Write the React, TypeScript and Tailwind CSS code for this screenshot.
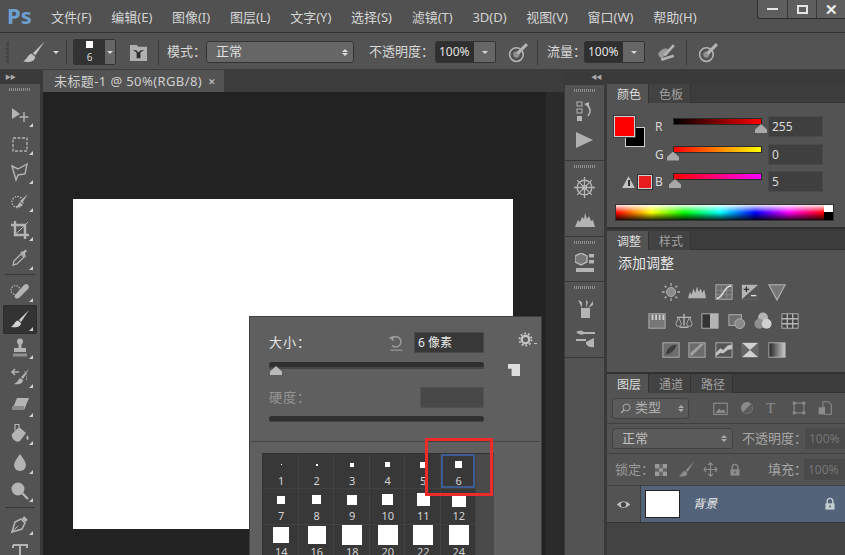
import type { ReactNode } from 'react';

// Photoshop CS6 workspace with the brush preset picker open

const ICON = '#b4b4b4';

function Svg({ size = 20, w, h, children, className }: { size?: number; w?: number; h?: number; children: ReactNode; className?: string }) {
    return (
        <svg width={w ?? size} height={h ?? size} viewBox="0 0 20 20" className={className} fill="none">
            {children}
        </svg>
    );
}

const BrushIcon = ({ size = 20, color = ICON }: { size?: number; color?: string }) => (
    <Svg size={size}>
        <path d="M19 1 L9 11 L11 13 Z" fill={color} />
        <path d="M8 11.5 C5 12 5 15 1 18 C6 19 11 18 11 14 Z" fill={color} />
    </Svg>
);

const Caret = ({ color = '#d8d8d8' }: { color?: string }) => (
    <div className="w-0 h-0 border-l-[3.5px] border-r-[3.5px] border-t-[3px] border-l-transparent border-r-transparent" style={{ borderTopColor: color }} />
);

const Grip = ({ w = 22 }: { w?: number }) => (
    <div className="h-[3px] bg-[repeating-linear-gradient(90deg,#8f8f8f_0,#8f8f8f_1px,transparent_1px,transparent_2px)]" style={{ width: w }} />
);

const Corner = () => <div className="absolute right-[4px] bottom-[3px] w-0 h-0 border-l-[4px] border-b-[4px] border-l-transparent border-b-[#d0d0d0]" />;

const SmallLock = ({ color = ICON }: { color?: string }) => (
    <Svg size={14}>
        <path d="M6 10 V6 a4 4 0 0 1 8 0 V10" stroke={color} strokeWidth="2" />
        <rect x="3.5" y="9" width="13" height="9" fill={color} />
        <rect x="9" y="12" width="2" height="3" fill="#555" />
    </Svg>
);

// toolbar drawings
const tools1: ReactNode[] = [
    <Svg key="m"><path d="M2 3 L10 9 L2 14 Z" fill={ICON} /><path d="M14 7 V17 M9.5 12 H18.5" stroke={ICON} strokeWidth="1.4" /></Svg>,
    <Svg key="r"><rect x="3" y="4" width="14" height="13" stroke={ICON} strokeWidth="1.3" strokeDasharray="3 1.5" /></Svg>,
    <Svg key="l"><path d="M2 4 L8 7 L17 2 L15 12 L8 13 L6 18 Z" stroke={ICON} strokeWidth="1.4" /></Svg>,
    <Svg key="q"><circle cx="7.5" cy="11" r="5.5" stroke={ICON} strokeWidth="1.3" strokeDasharray="1.5 1.3" /><path d="M18 3 L10 10 L12 12 Z M10 11 C8 13 8 15 5 16 C9 17 12 15 12 13Z" fill={ICON} /></Svg>,
    <Svg key="c"><path d="M5 1 V15 H19 M1 5 H15 V19" stroke={ICON} strokeWidth="2.4" /><path d="M5 15 L18 2" stroke={ICON} strokeWidth="1" /></Svg>,
    <Svg key="e"><path d="M4 13 L11 6 L14 9 L7 16 L3 17 Z" stroke={ICON} strokeWidth="1.3" /><path d="M10 4 L16 10 L15 5 L17 3 L15.5 1.5 L13 3.5Z" fill={ICON} /></Svg>,
];

const tools2: ReactNode[] = [
    <Svg key="h"><circle cx="5.5" cy="9" r="4.5" stroke={ICON} strokeWidth="1.2" strokeDasharray="1.5 1.2" /><path d="M6 13 L14 4 Q17 2 18.5 4.5 Q19.5 7 17 9 L9 17 Q6 18.5 4.5 16 Q4 14.5 6 13Z" fill={ICON} /></Svg>,
    <BrushIcon key="b" color="#d2d2d2" />,
    <Svg key="s"><circle cx="10" cy="3.5" r="3" fill={ICON} /><path d="M8.5 5 H11.5 V10 H16 V14 H4 V10 H8.5Z" fill={ICON} /><rect x="3" y="15.5" width="14" height="3" fill="#8f8f8f" /></Svg>,
    <Svg key="y"><path d="M19 2 L11 10 L13 12Z M10 11 C8 13 8 15 4 17 C8 18 13 17 13 13Z" fill={ICON} /><path d="M2 5 H9 M5 2 L2 5 L5 8" stroke={ICON} strokeWidth="1.5" /><path d="M14 4 Q18 8 16 14" stroke={ICON} strokeWidth="1" strokeDasharray="1.5 1.2" /></Svg>,
    <Svg key="z"><path d="M7 3 H19 L14 15 H2 Z" fill={ICON} /><path d="M2 11 L7 11 L14 11 L14 15 H2 Z" fill="#8a8a8a" /></Svg>,
    <Svg key="f"><path d="M2 10 L9 3 L16 9 L10 17 Q7 19 4 16 Q1 13 2 10Z" fill={ICON} /><path d="M9 3 V0.5 H5 V7" stroke={ICON} strokeWidth="1.2" /><path d="M17.5 11 Q19.5 14 18 16 Q16 16 16.5 13Z" fill={ICON} /></Svg>,
    <Svg key="d"><path d="M10 2 Q16 10 16 13 A6 6 0 0 1 4 13 Q4 10 10 2Z" fill={ICON} /></Svg>,
    <Svg key="g"><circle cx="8" cy="8" r="6.5" fill={ICON} /><path d="M12 12 L18 18" stroke={ICON} strokeWidth="2.4" /></Svg>,
];

const tools3: ReactNode[] = [
    <Svg key="p"><path d="M14 2 L18 6 L15 8 L12 5Z" fill={ICON} /><path d="M11 5 L15 9 L12 15 L2 18 L5 8 Z" stroke={ICON} strokeWidth="1.6" /><path d="M2 18 L8 12" stroke={ICON} strokeWidth="1" /></Svg>,
    <Svg key="t"><path d="M3 3 H17 V6 M3 3 V6 M10 3 V18 M7 18 H13" stroke={ICON} strokeWidth="2" /></Svg>,
];

function ToolItem({ children, active }: { children: ReactNode; active?: boolean }) {
    return (
        <div className={`relative h-[28.6px] mx-[3px] flex items-center justify-center rounded-[2px] ${active ? 'bg-[#333333] shadow-[inset_0_0_0_1px_#2c2c2c]' : ''}`}>
            {children}
            <Corner />
        </div>
    );
}

function Toolbar() {
    return (
        <div className="w-[41px] shrink-0 bg-[#535353] border-r border-[#3a3a3a]">
            <div className="h-[14px] bg-[#3a3a3a] flex items-center pl-[5px] text-[#a8a8a8] text-[6px] tracking-[-1px]">▶▶</div>
            <div className="h-[17px] flex justify-center pt-[4px]"><Grip /></div>
            {tools1.map((t, i) => <ToolItem key={i}>{t}</ToolItem>)}
            <div className="h-[4px] flex items-center px-[5px]"><div className="h-px w-full bg-[#383838]" /></div>
            {tools2.map((t, i) => <ToolItem key={i} active={i === 1}>{t}</ToolItem>)}
            <div className="h-[4px] flex items-center px-[5px]"><div className="h-px w-full bg-[#383838]" /></div>
            {tools3.map((t, i) => <ToolItem key={i}>{t}</ToolItem>)}
        </div>
    );
}

const menus = ['文件(F)', '编辑(E)', '图像(I)', '图层(L)', '文字(Y)', '选择(S)', '滤镜(T)', '3D(D)', '视图(V)', '窗口(W)', '帮助(H)'];

function MenuBar() {
    return (
        <div className="h-[33px] bg-[#515151] flex items-start border-b border-[#333333]">
            <div className="w-[51px] pl-[7px] pt-[2px] text-[#6d9fd0] text-[22px] font-bold leading-[26px]">Ps</div>
            <div className="flex gap-[19.7px] pt-[8px] text-[13px] leading-[18px] text-[#d4d4d4] whitespace-nowrap">
                {menus.map((m) => <span key={m}>{m}</span>)}
            </div>
            <div className="ml-auto flex h-[19px] rounded-bl-[3px] border-l border-b border-[#2e2e2e] bg-[#5e5e5e]">
                <div className="w-[30px] flex items-center justify-center border-r border-[#3a3a3a]"><div className="w-[11px] h-[2px] bg-[#e4e4e4]" /></div>
                <div className="w-[29px] flex items-center justify-center border-r border-[#3a3a3a]"><div className="w-[11px] h-[9px] border-2 border-[#e4e4e4]" /></div>
                <div className="w-[28px] flex items-center justify-center text-[#eeeeee] text-[15px] font-bold leading-none">✕</div>
            </div>
        </div>
    );
}

const OptSep = ({ ml }: { ml: string }) => <div className={`w-px h-[25px] bg-[#3a3a3a] ${ml}`} />;

function NumberDrop({ value }: { value: string }) {
    return (
        <div className="flex w-[61px] h-[22px] rounded-[2px] border border-[#333333] overflow-hidden">
            <div className="flex-1 bg-[#2f2f2f] text-[12px] leading-[20px] pl-[3px] text-[#e2e2e2]">{value}</div>
            <div className="w-[21px] bg-[#666666] flex items-center justify-center"><Caret /></div>
        </div>
    );
}

const AirIcon = () => (
    <Svg size={21}>
        <circle cx="8" cy="12" r="6.5" stroke={ICON} strokeWidth="1.5" />
        <circle cx="8" cy="12" r="3" fill="#8f8f8f" />
        <path d="M9 11 L18 2" stroke={ICON} strokeWidth="3" />
    </Svg>
);

function OptionsBar() {
    return (
        <div className="h-[37px] pt-[2px] bg-[#535353] flex items-center border-b border-[#3d3d3d]">
            <div className="ml-[6px] w-[3px] h-[22px] bg-[repeating-linear-gradient(0deg,#3c3c3c_0,#3c3c3c_1px,transparent_1px,transparent_2px)]" />
            <div className="ml-[13px]"><BrushIcon size={24} color="#c0c0c0" /></div>
            <div className="ml-[7px]"><Caret /></div>
            <OptSep ml="ml-[7px]" />
            <div className="ml-[6px] flex w-[43px] h-[26px] rounded-[2px] border border-[#333333] overflow-hidden">
                <div className="w-[31px] bg-[#333333] flex flex-col items-center pt-[1px]">
                    <div className="w-[7px] h-[7px] bg-white" />
                    <span className="text-[10px] leading-[14px] text-[#d8d8d8] mt-[2px]">6</span>
                </div>
                <div className="flex-1 bg-[#666666] flex items-center justify-center"><Caret /></div>
            </div>
            <div className="ml-[13px]">
                <Svg size={19}>
                    <path d="M1 2 H8 L10 4 H19 V19 H1Z" fill="#b0b0b0" />
                    <path d="M4 7 L8 10 V16 H12 V10 L16 7 L12 8 L10 10 L8 8Z" fill="#2c2c2c" />
                </Svg>
            </div>
            <OptSep ml="ml-[10px]" />
            <span className="ml-[8px] w-[39px] text-[13px] text-[#d8d8d8] whitespace-nowrap">模式：</span>
            <div className="w-[148px] h-[22px] rounded-[3px] border border-[#333333] bg-[#666666] flex items-center justify-between pl-[9px] pr-[5px] text-[13px] text-[#e0e0e0]">
                正常
                <div className="flex flex-col gap-[1px]">
                    <div className="w-0 h-0 border-l-[3px] border-r-[3px] border-b-[3px] border-l-transparent border-r-transparent border-b-[#dddddd]" />
                    <div className="w-0 h-0 border-l-[3px] border-r-[3px] border-t-[3px] border-l-transparent border-r-transparent border-t-[#dddddd]" />
                </div>
            </div>
            <span className="ml-[15px] w-[66px] text-[13px] text-[#d8d8d8] whitespace-nowrap">不透明度：</span>
            <NumberDrop value="100%" />
            <div className="ml-[12px]"><AirIcon /></div>
            <OptSep ml="ml-[8px]" />
            <span className="ml-[9px] w-[37px] text-[13px] text-[#d8d8d8] whitespace-nowrap">流量：</span>
            <NumberDrop value="100%" />
            <div className="ml-[11px]">
                <Svg size={21}>
                    <path d="M2 11 Q7 4 12 7 L6 16 Q3 15 2 11Z" fill="#9a9a9a" />
                    <path d="M8 13 L17 3 M5 17 L17 13" stroke={ICON} strokeWidth="2.5" />
                </Svg>
            </div>
            <OptSep ml="ml-[9px]" />
            <div className="ml-[11px]"><AirIcon /></div>
        </div>
    );
}

const sizes: [number, number][] = [
    [1, 1], [2, 2], [3, 4], [4, 5], [5, 6], [6, 7],
    [7, 8], [8, 9], [9, 10], [10, 11], [11, 13], [12, 14],
    [14, 16], [16, 18], [18, 20], [20, 20], [22, 20], [24, 20],
];

function BrushPopup() {
    return (
        <div className="absolute left-[249px] top-[316px] w-[293px] h-[260px] bg-[#5f5f5f] border border-[#3f3f3f] z-10">
            <div className="pl-[19px]">
                <div className="flex items-center h-[21px] mt-[15px]">
                    <span className="shrink-0 text-[13px] text-[#e6e6e6] w-[119px] tracking-[1px]">大小：</span>
                    <div className="shrink-0 w-[26px]">
                        <Svg size={16}>
                            <path d="M5 4 A6.5 6.5 0 1 1 5 13" stroke="#9a9a9a" strokeWidth="2" />
                            <path d="M1 3 L7 1 V8Z" fill="#9a9a9a" />
                            <path d="M3 19 H18" stroke="#9a9a9a" strokeWidth="1.5" />
                        </Svg>
                    </div>
                    <div className="shrink-0 w-[70px] h-[21px] bg-[#383838] border border-[#4a4a4a] text-[12px] leading-[19px] pl-[3px] text-[#e8e8e8]">6 像素</div>
                    <div className="shrink-0 ml-[34px] mb-[7px] flex items-end gap-[1px]">
                        <Svg size={15}>
                            <circle cx="10" cy="10" r="5" stroke="#c4c4c4" strokeWidth="3" />
                            <circle cx="10" cy="10" r="8" stroke="#c4c4c4" strokeWidth="2.5" strokeDasharray="2.5 2.5" />
                        </Svg>
                        <div className="w-[3px] h-px bg-[#c4c4c4] mb-[3px]" />
                    </div>
                </div>
                <div className="flex mt-[9px] h-[22px]">
                    <div className="relative w-[215px] h-[7px] rounded-[3px] bg-[#2f2f2f] shadow-[inset_0_-2px_0_#444444]">
                        <div className="absolute left-[1px] top-[4px] w-[12px] h-[9px] bg-[#b8b8b8] [clip-path:polygon(50%_0,100%_60%,100%_100%,0_100%,0_60%)]" />
                    </div>
                    <div className="ml-[24px] mt-[2px] relative w-[12px] h-[12px] bg-[#dddddd] [clip-path:polygon(0_0,100%_0,100%_100%,30%_100%,30%_40%,0_40%)]" />
                </div>
                <div className="flex items-center mt-[3px] h-[21px]">
                    <span className="text-[13px] text-[#959595] w-[151px] tracking-[1px]">硬度：</span>
                    <div className="w-[64px] h-[21px] bg-[#484848] border border-[#525252]" />
                </div>
                <div className="w-[215px] h-[6px] rounded-[3px] bg-[#2f2f2f] mt-[8px] shadow-[inset_0_-1px_0_#444444]" />
            </div>
            <div className="h-px bg-[#454545] mt-[19px] mx-[1px]" />
            <div className="ml-[12px] mt-[11px] w-[232px] bg-[#4a4a4a] border-t border-l border-[#333333] flex">
                <div className="w-[213px] grid grid-cols-6 bg-[#383838]">
                    {sizes.map(([n, s]) => (
                        <div key={n} className={`h-[35.3px] flex flex-col items-center pl-[2px] border-r border-b border-[#424242] ${n === 6 ? 'shadow-[inset_0_0_0_2px_#3f5c92]' : ''}`}>
                            <div className="h-[21px] flex items-center justify-center">
                                <div className="bg-white" style={{ width: s, height: s }} />
                            </div>
                            <span className="text-[11px] leading-[12px] text-[#d4d4d4]">{n}</span>
                        </div>
                    ))}
                </div>
            </div>
        </div>
    );
}

function Workspace() {
    return (
        <div className="flex-1 min-w-0 flex flex-col">
            <div className="h-[22px] bg-[#3c3c3c] flex">
                <div className="w-[181px] bg-[#535353] flex items-center pl-[11px] pt-[2px] text-[13px] tracking-[0.4px] text-[#cfcfcf] whitespace-nowrap">
                    未标题-1 @ 50%(RGB/8)
                    <span className="ml-[6px] text-[9px] text-[#d0d0d0]">✕</span>
                </div>
            </div>
            <div className="flex-1 flex min-h-0">
                <div className="flex-1 bg-[#222222] pl-[30px] pt-[107px]">
                    <div className="w-[440px] h-[330px] bg-white" />
                </div>
                <div className="w-[18px] bg-[#2b2b2b]" />
            </div>
        </div>
    );
}

function CollapsedGroup({ children, h }: { children: ReactNode; h: string }) {
    return (
        <div className={`${h} border-b border-[#383838] flex flex-col items-center pt-[4px]`}>
            <Grip />
            <div className="flex flex-col items-center gap-[11px] mt-[9px]">{children}</div>
        </div>
    );
}

function IconDock() {
    return (
        <div className="w-[40px] shrink-0 bg-[#535353] border-l border-[#3a3a3a]">
            <div className="h-[15px] bg-[#3a3a3a] flex items-center justify-end pr-[3px] text-[#a8a8a8] text-[6px] tracking-[-1px]">◀◀</div>
            <CollapsedGroup h="h-[76px]">
                <Svg size={20}>
                    <rect x="2" y="1" width="5" height="4" stroke={ICON} />
                    <rect x="2" y="8" width="5" height="4" stroke={ICON} />
                    <rect x="2" y="15" width="5" height="5" fill={ICON} />
                    <path d="M11 3 Q18 8 13 15" stroke={ICON} strokeWidth="1.6" />
                    <path d="M9 3 L14 1 V6Z" fill={ICON} />
                </Svg>
                <div className="w-0 h-0 border-t-[8px] border-b-[8px] border-l-[17px] border-t-transparent border-b-transparent border-l-[#b0b0b0]" />
            </CollapsedGroup>
            <CollapsedGroup h="h-[76px]">
                <Svg size={21}>
                    <circle cx="10" cy="10" r="7" stroke={ICON} strokeWidth="1.4" />
                    <circle cx="10" cy="10" r="2.5" fill={ICON} />
                    <path d="M10 0 V20 M0 10 H20 M3 3 L17 17 M17 3 L3 17" stroke={ICON} strokeWidth="1.2" />
                </Svg>
                <Svg size={20}>
                    <path d="M0 18 L3 11 L5 13 L7 8 L9 10 L10 4 L12 10 L14 7 L16 12 L18 11 L20 18Z" fill={ICON} />
                </Svg>
            </CollapsedGroup>
            <CollapsedGroup h="h-[45px]">
                <Svg size={20}>
                    <path d="M6 0 L12 3 V9 L6 12 L0 9 V3Z" stroke={ICON} strokeWidth="1.4" fill="#777777" />
                    <rect x="14" y="1" width="5" height="3.5" fill={ICON} />
                    <rect x="14" y="7" width="5" height="3.5" fill={ICON} />
                    <rect x="1" y="15" width="18" height="4" fill={ICON} />
                </Svg>
            </CollapsedGroup>
            <CollapsedGroup h="h-[76px]">
                <Svg size={20}>
                    <rect x="6" y="10" width="9" height="10" fill={ICON} />
                    <path d="M7 10 L3 2 L7 4 Z M11 10 V2 L13 4Z M13 10 L18 3 L18 7Z" fill={ICON} />
                </Svg>
                <Svg size={20}>
                    <path d="M1 3 Q6 0 9 3 H20 V5 H9 Q5 7 1 3Z M1 10 H11 V12 H1Z M11 13 L19 9 V18 Q14 19 11 15Z" fill={ICON} />
                </Svg>
            </CollapsedGroup>
        </div>
    );
}

function Tabs({ items }: { items: string[] }) {
    return (
        <div className="h-[19px] bg-[#3c3c3c] flex border-b border-[#333333]">
            {items.map((t, i) => (
                <div key={t} className={`h-[19px] pl-[10px] pr-[7px] pt-[2px] flex items-center text-[12px] border-r border-[#333333] ${i === 0 ? 'bg-[#535353] text-[#dcdcdc]' : 'bg-[#424242] text-[#a0a0a0]'}`}>
                    {t}
                </div>
            ))}
        </div>
    );
}

function ColorRow({ label, value, track, thumb, left }: { label: string; value: string; track: string; thumb: number; left?: ReactNode }) {
    return (
        <div className="flex h-[27.5px]">
            <div className="w-[40px] flex items-center justify-end pr-[3px] gap-[3px] pb-[5px]">{left}</div>
            <span className="w-[18px] text-[12px] leading-[22px] text-[#d8d8d8]">{label}</span>
            <div className="relative w-[89px] h-[7px] mt-[2px] border border-[#2a2a2a]" style={{ background: track }}>
                <div className="absolute top-[5px] w-[12px] h-[9px] bg-[#a8a8a8] [clip-path:polygon(50%_0,100%_60%,100%_100%,0_100%,0_60%)]" style={{ left: thumb }} />
            </div>
            <div className="ml-[6px] w-[55px] h-[21px] bg-[#3f3f3f] border border-[#4a4a4a] text-[12px] leading-[19px] pl-[3px] text-[#dcdcdc]">{value}</div>
        </div>
    );
}

function ColorPanel() {
    return (
        <div className="h-[145px] bg-[#535353] border-b-2 border-[#303030]">
            <Tabs items={['颜色', '色板']} />
            <div className="relative pt-[13px] pl-[8px]">
                <div className="absolute left-[18px] top-[24px] w-[20px] h-[20px] bg-black border border-[#cfcfcf]" />
                <div className="absolute left-[7px] top-[13px] w-[21px] h-[21px] bg-[#ff0000] border border-[#d0d0d0] outline outline-1 outline-[#3a3a3a]" />
                <ColorRow label="R" value="255" track="linear-gradient(90deg,#000,#ff0000)" thumb={81} />
                <ColorRow label="G" value="0" track="linear-gradient(90deg,#ff0000,#ffff00)" thumb={-7} />
                <ColorRow
                    label="B"
                    value="5"
                    track="linear-gradient(90deg,#ff0000,#ff00ff)"
                    thumb={-5}
                    left={
                        <>
                            <div className="relative w-[13px] h-[12px] bg-[#c4c4c4] [clip-path:polygon(50%_0,100%_100%,0_100%)]">
                                <div className="absolute left-[5.5px] top-[4px] w-[2px] h-[6px] bg-[#333333]" />
                            </div>
                            <div className="w-[14px] h-[14px] bg-[#e81c1c] border border-[#d0d0d0] outline outline-1 outline-[#333333]" />
                        </>
                    }
                />
                <div className="flex mt-[5px] w-[219px] h-[17px] border border-[#333333]">
                    <div className="flex-1 bg-[linear-gradient(180deg,rgba(255,255,255,0.9)_0%,rgba(255,255,255,0)_50%,rgba(0,0,0,0)_50%,rgba(0,0,0,0.85)_100%),linear-gradient(90deg,#ff0000,#ffff00_17%,#00ff00_33%,#00ffff_50%,#0000ff_67%,#ff00ff_83%,#ff0000)]" />
                    <div className="w-[9px] flex flex-col"><div className="flex-1 bg-white" /><div className="flex-1 bg-black" /></div>
                </div>
            </div>
        </div>
    );
}

const A = ({ children }: { children: ReactNode }) => <Svg size={18}>{children}</Svg>;

const adjust: ReactNode[][] = [
    [
        <A key="1"><circle cx="10" cy="10" r="5" fill="#8c8c8c" stroke={ICON} /><path d="M10 0 V3 M10 17 V20 M0 10 H3 M17 10 H20 M3 3 L5 5 M15 15 L17 17 M17 3 L15 5 M5 15 L3 17" stroke={ICON} strokeWidth="1.5" /></A>,
        <A key="2"><path d="M0 17 L2 10 L4 13 L6 6 L8 11 L10 4 L12 10 L14 6 L16 11 L18 7 L20 17Z" fill={ICON} /></A>,
        <A key="3"><rect x="1" y="2" width="18" height="16" fill="#6a6a6a" stroke={ICON} /><path d="M1 8 H19 M1 13 H19 M7 2 V18 M13 2 V18" stroke="#8c8c8c" /><path d="M2 17 C9 17 10 3 18 3" stroke="#e0e0e0" strokeWidth="1.6" /></A>,
        <A key="4"><rect x="1" y="2" width="18" height="16" fill={ICON} /><path d="M1 18 L19 2 V18Z" fill="#555555" /><path d="M3 7 H9 M6 4 V10" stroke="#333" strokeWidth="1.5" /><path d="M11 14 H17" stroke="#e0e0e0" strokeWidth="1.5" /></A>,
        <A key="5"><path d="M1 2 H19 L10 19Z" fill="#777777" stroke={ICON} strokeWidth="1.2" /></A>,
    ],
    [
        <A key="1"><rect x="1" y="2" width="18" height="16" fill="#777777" stroke={ICON} /><path d="M5 3 V9 M9 3 V9 M13 3 V9 M17 3 V9" stroke="#cccccc" strokeWidth="2" /></A>,
        <A key="2"><path d="M10 2 V15 M5 17 H15 M2 6 H18" stroke={ICON} strokeWidth="1.6" /><path d="M1 13 L4 6 L7 13 A3 3 0 0 1 1 13Z M13 13 L16 6 L19 13 A3 3 0 0 1 13 13Z" stroke={ICON} /></A>,
        <A key="3"><rect x="1" y="2" width="18" height="16" fill="#333333" stroke={ICON} /><rect x="10" y="2" width="9" height="16" fill="#b4b4b4" /></A>,
        <A key="4"><rect x="1" y="3" width="14" height="12" fill="#6f6f6f" stroke={ICON} /><circle cx="13" cy="13" r="5.5" fill="#8a8a8a" stroke={ICON} /></A>,
        <A key="5"><circle cx="10" cy="6" r="5.5" fill={ICON} /><circle cx="6" cy="13" r="5.5" fill="#8f8f8f" /><circle cx="14" cy="13" r="5.5" fill="#d0d0d0" /></A>,
        <A key="6"><rect x="1" y="2" width="18" height="16" fill="#444444" stroke={ICON} /><path d="M1 7.5 H19 M1 13 H19 M7 2 V18 M13 2 V18" stroke={ICON} strokeWidth="1.5" /></A>,
    ],
    [
        <A key="1"><rect x="1" y="2" width="18" height="16" fill="#6c6c6c" stroke={ICON} /><path d="M4 15 Q6 5 16 4 Q14 14 4 15Z" fill="#3d3d3d" /></A>,
        <A key="2"><rect x="1" y="2" width="18" height="16" fill="#6c6c6c" stroke={ICON} /><path d="M2 14 L14 3 H18 L4 17Z" fill="#a0a0a0" /></A>,
        <A key="3"><rect x="1" y="2" width="18" height="16" fill="#555555" stroke={ICON} /><path d="M1 13 L6 8 L9 10 L14 5 L19 4 V9 L14 10 L9 14 L6 13 L1 17Z" fill="#c4c4c4" /></A>,
        <A key="4"><rect x="1" y="2" width="18" height="16" fill="#d0d0d0" /><path d="M1 2 L10 10 L1 18Z M19 2 L10 10 L19 18Z" fill="#666666" /></A>,
        <A key="5"><defs><linearGradient id="gr"><stop offset="0" stopColor="#222" /><stop offset="1" stopColor="#ccc" /></linearGradient></defs><rect x="1" y="2" width="18" height="16" fill="url(#gr)" stroke={ICON} /></A>,
    ],
];

function AdjustPanel() {
    return (
        <div className="h-[143px] bg-[#535353] border-b-2 border-[#303030]">
            <Tabs items={['调整', '样式']} />
            <div className="pl-[11px] pt-[3px] text-[14px] leading-[20px] text-[#e4e4e4]">添加调整</div>
            <div className="flex flex-col gap-[11px] items-center pr-[5px] mt-[10px]">
                {adjust.map((row, i) => (
                    <div key={i} className="flex gap-[8.5px] h-[18px]">{row}</div>
                ))}
            </div>
        </div>
    );
}

const SelectArrows = () => (
    <div className="flex flex-col gap-[1px]">
        <div className="w-0 h-0 border-l-[3px] border-r-[3px] border-b-[3px] border-l-transparent border-r-transparent border-b-[#aaaaaa]" />
        <div className="w-0 h-0 border-l-[3px] border-r-[3px] border-t-[3px] border-l-transparent border-r-transparent border-t-[#aaaaaa]" />
    </div>
);

function LayersPanel() {
    const dim = '#8c8c8c';
    return (
        <div className="flex-1 bg-[#434343]">
            <Tabs items={['图层', '通道', '路径']} />
            <div className="h-[31px] bg-[#535353] border-b border-[#404040] flex items-center pl-[5px]">
                <div className="w-[77px] h-[21px] rounded-[3px] border border-[#414141] bg-[#5a5a5a] flex items-center pl-[7px] pr-[4px] text-[13px] text-[#b0b0b0]">
                    <svg width="11" height="11" viewBox="0 0 11 11" fill="none"><circle cx="6.5" cy="4.5" r="3.5" stroke="#aaaaaa" /><path d="M4 7 L1 10" stroke="#aaaaaa" strokeWidth="1.3" /></svg>
                    <span className="ml-[4px] flex-1">类型</span>
                    <SelectArrows />
                </div>
                <div className="flex items-center ml-[24px] gap-[12px]">
                    <Svg size={15}><rect x="1" y="3" width="18" height="15" stroke={dim} strokeWidth="1.5" /><path d="M3 16 L8 10 L11 13 L14 11 L17 16Z" fill={dim} /></Svg>
                    <Svg size={14}><circle cx="10" cy="10" r="8.5" fill={dim} /><path d="M4 16 L16 4 A8.5 8.5 0 0 1 4 16Z" fill="#5d5d5d" /></Svg>
                    <span className="text-[15px] leading-none font-['Liberation_Serif',serif] text-[#8c8c8c] w-[14px]">T</span>
                    <Svg size={14}><rect x="3" y="3" width="14" height="14" stroke={dim} strokeWidth="1.5" /><rect x="1" y="1" width="4" height="4" fill={dim} /><rect x="15" y="1" width="4" height="4" fill={dim} /><rect x="1" y="15" width="4" height="4" fill={dim} /><rect x="15" y="15" width="4" height="4" fill={dim} /></Svg>
                    <Svg size={14}><path d="M7 1 H15 L19 5 V19 H9 V9 H7Z" stroke={dim} strokeWidth="1.5" /><rect x="1" y="9" width="9" height="10" fill={dim} /></Svg>
                </div>
            </div>
            <div className="h-[30px] bg-[#535353] border-b border-[#404040] flex items-center pl-[5px]">
                <div className="w-[121px] h-[21px] rounded-[3px] border border-[#414141] bg-[#5a5a5a] flex items-center justify-between pl-[9px] pr-[5px] text-[13px] text-[#c0c0c0]">
                    正常
                    <SelectArrows />
                </div>
                <span className="ml-[9px] w-[63px] text-[13px] text-[#a6a6a6] whitespace-nowrap">不透明度：</span>
                <div className="flex-1 h-[21px] bg-[#4a4a4a] text-[12px] leading-[21px] pl-[4px] text-[#757575]">100%</div>
            </div>
            <div className="h-[32px] bg-[#535353] border-b border-[#404040] flex items-center pl-[8px]">
                <span className="w-[40px] text-[13px] text-[#999999] whitespace-nowrap">锁定：</span>
                <Svg size={12} className="mr-[11px]"><rect width="20" height="20" fill="#666666" /><path d="M0 0 H7 V7 H0Z M13 0 H20 V7 H13Z M7 7 H13 V13 H7Z M0 13 H7 V20 H0Z M13 13 H20 V20 H13Z" fill="#9a9a9a" /></Svg>
                <div className="mr-[8px]"><BrushIcon size={17} color={dim} /></div>
                <Svg size={15} className="mr-[10px]"><path d="M10 1 V19 M1 10 H19 M10 1 L7 4 M10 1 L13 4 M10 19 L7 16 M10 19 L13 16 M1 10 L4 7 M1 10 L4 13 M19 10 L16 7 M19 10 L16 13" stroke={dim} strokeWidth="1.5" /></Svg>
                <SmallLock color={dim} />
                <span className="ml-[26px] w-[36px] text-[13px] text-[#a6a6a6] whitespace-nowrap">填充：</span>
                <div className="flex-1 h-[21px] bg-[#4a4a4a] text-[12px] leading-[21px] pl-[4px] text-[#757575]">100%</div>
            </div>
            <div className="h-[37px] flex border-b border-[#333333]">
                <div className="w-[34px] bg-[#535353] border-r border-[#3f3f3f] flex items-center justify-center">
                    <Svg size={15}><path d="M1 10 Q10 1 19 10 Q10 19 1 10Z" fill="#c0c0c0" /><circle cx="10" cy="10" r="3.5" fill="#444444" /></Svg>
                </div>
                <div className="flex-1 bg-[#52637a] flex items-center pl-[4px] pr-[8px]">
                    <div className="w-[35px] h-[28px] bg-white border border-[#222222]" />
                    <span className="ml-[13px] flex-1 text-[12px] italic text-[#e8e8e8]">背景</span>
                    <SmallLock color="#c4ccd4" />
                </div>
            </div>
        </div>
    );
}

export default function App() {
    return (
        <div className="relative w-[845px] h-[555px] overflow-hidden bg-[#535353] font-['Noto_Sans','Noto_Sans_CJK_SC',sans-serif] flex flex-col">
            <MenuBar />
            <OptionsBar />
            <div className="flex-1 min-h-0 flex">
                <Toolbar />
                <div className="w-[2px] bg-[#3a3a3a]" />
                <Workspace />
                <IconDock />
                <div className="w-[3px] bg-[#3a3a3a]" />
                <div className="w-[238px] shrink-0 flex flex-col">
                    <div className="h-[14px] bg-[#3a3a3a] shrink-0" />
                    <ColorPanel />
                    <div className="h-[2px] bg-[#3a3a3a] shrink-0" />
                    <AdjustPanel />
                    <LayersPanel />
                </div>
            </div>
            <BrushPopup />
            <div className="absolute left-[425px] top-[438px] w-[68px] h-[58px] border-[3px] border-[#ee2b2b] z-20" />
        </div>
    );
}
